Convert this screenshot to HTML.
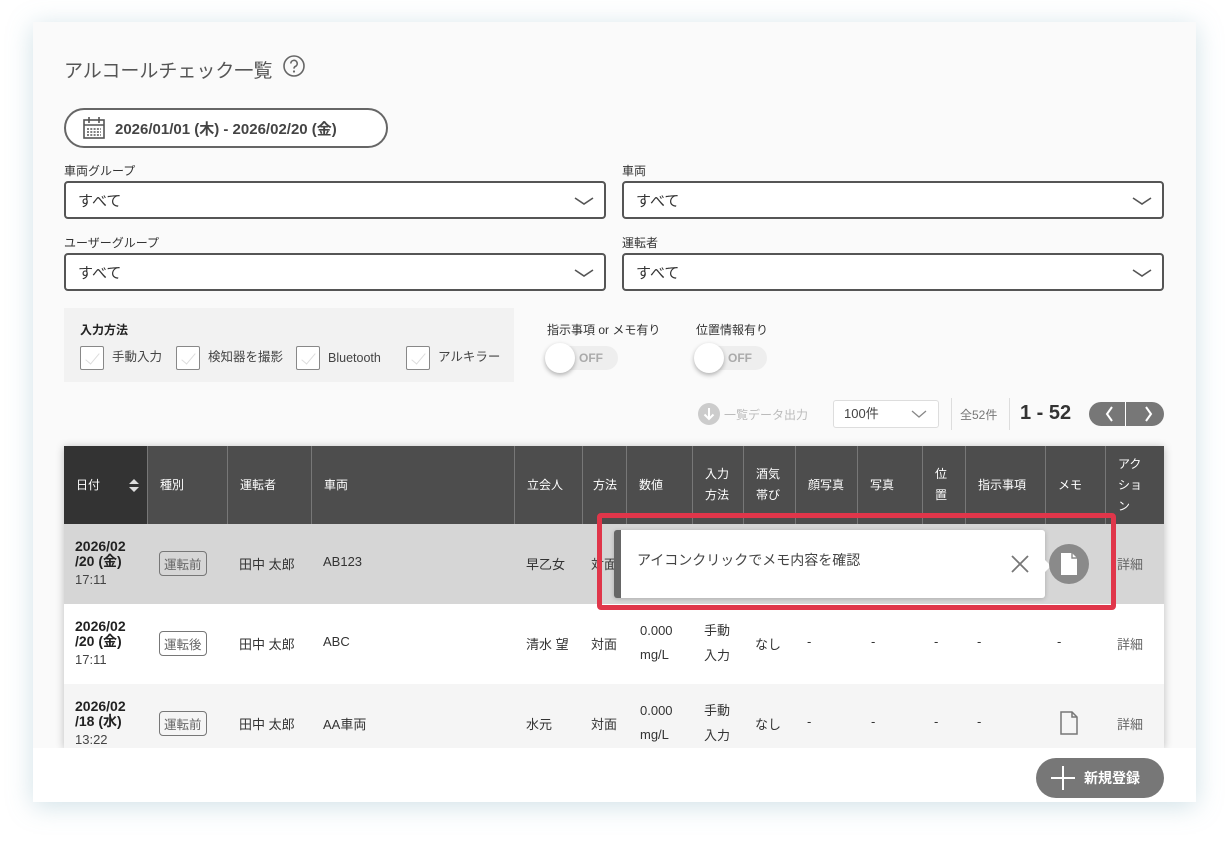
<!DOCTYPE html>
<html><head><meta charset="utf-8">
<style>
*{box-sizing:border-box;margin:0;padding:0}
body{width:1228px;height:844px;background:#fff;font-family:"Liberation Sans","Noto Sans CJK JP",sans-serif;color:#333;position:relative;overflow:hidden}
.a{position:absolute}
.card{left:33px;top:22px;width:1163px;height:780px;background:#fafafa;box-shadow:0 4px 24px rgba(120,170,185,.35)}
.lbl{font-size:12px;color:#333}
.sel{height:38px;border:2px solid #555;border-radius:4px;background:#fff;font-size:15px;padding:7px 12px;color:#333}
.sel svg{position:absolute;right:10px;top:13px}
.cb{width:24px;height:24px;border:1px solid #888;border-radius:2px;background:#fff}
.cb::after{content:"";position:absolute;left:8px;top:3px;width:6px;height:13px;border-right:1px solid #ddd;border-bottom:1px solid #ddd;transform:rotate(40deg)}
.cbl{font-size:12.5px;color:#444;line-height:24px;height:24px}
.tog{width:72px;height:24px;border-radius:12px;background:#eee}
.knob{width:30px;height:30px;border-radius:50%;background:#fff;box-shadow:0 2px 5px rgba(0,0,0,.3)}
.th{background:#4d4d4d;color:#fff;font-size:12px;border-right:1px solid #777;height:78px;top:446px;display:flex;align-items:center;padding-left:12px;line-height:21px}
.td{font-size:13px;color:#333}
.tag{border:1px solid #777;border-radius:4px;font-size:12.5px;color:#666;padding:2px 4px;background:transparent}
.dt{font-size:14px;font-weight:bold;line-height:15px;color:#222}
.tm{font-size:13px;color:#444}
</style></head><body>
<div class="a card"></div>
<div class="a" style="left:64px;top:56px;font-size:19px;color:#555">アルコールチェック一覧</div>
<svg class="a" style="left:283px;top:55px" width="22" height="22" viewBox="0 0 22 22"><circle cx="11" cy="11" r="10" fill="none" stroke="#666" stroke-width="1.6"/><path d="M7.8 8.5a3.2 3.2 0 1 1 4.6 2.9c-1 .5-1.4 1-1.4 2.2" fill="none" stroke="#666" stroke-width="1.6"/><circle cx="11" cy="16.5" r="1.1" fill="#666"/></svg>
<div class="a" style="left:64px;top:108px;width:324px;height:40px;border:2px solid #666;border-radius:20px;background:#fff"></div>
<svg class="a" style="left:82px;top:116px" width="24" height="24" viewBox="0 0 24 24"><rect x="2" y="4" width="20" height="18" fill="none" stroke="#555" stroke-width="1.6"/><path d="M7 1v6M17 1v6M2 9h20" stroke="#555" stroke-width="1.6"/><path d="M5 13h14M5 16h14M5 19h14" stroke="#555" stroke-width="1.5" stroke-dasharray="2 1.3"/></svg>
<div class="a" style="left:115px;top:118px;font-size:15px;font-weight:bold;color:#444">2026/01/01 (木) - 2026/02/20 (金)</div>

<div class="a lbl" style="left:64px;top:162px">車両グループ</div>
<div class="a lbl" style="left:622px;top:162px">車両</div>
<div class="a lbl" style="left:64px;top:234px">ユーザーグループ</div>
<div class="a lbl" style="left:622px;top:234px">運転者</div>
<div class="a sel" style="left:64px;top:181px;width:542px">すべて<svg width="20" height="10"><path d="M1 2l9 6 9-6" fill="none" stroke="#555" stroke-width="1.6"/></svg></div>
<div class="a sel" style="left:622px;top:181px;width:542px">すべて<svg width="20" height="10"><path d="M1 2l9 6 9-6" fill="none" stroke="#555" stroke-width="1.6"/></svg></div>
<div class="a sel" style="left:64px;top:253px;width:542px">すべて<svg width="20" height="10"><path d="M1 2l9 6 9-6" fill="none" stroke="#555" stroke-width="1.6"/></svg></div>
<div class="a sel" style="left:622px;top:253px;width:542px">すべて<svg width="20" height="10"><path d="M1 2l9 6 9-6" fill="none" stroke="#555" stroke-width="1.6"/></svg></div>

<div class="a" style="left:64px;top:308px;width:450px;height:74px;background:#f2f2f2"></div>
<div class="a" style="left:80px;top:321px;font-size:12px;font-weight:bold;color:#222">入力方法</div>
<div class="a cb" style="left:80px;top:346px"></div><div class="a cbl" style="left:112px;top:345px">手動入力</div>
<div class="a cb" style="left:176px;top:346px"></div><div class="a cbl" style="left:208px;top:345px">検知器を撮影</div>
<div class="a cb" style="left:296px;top:346px"></div><div class="a cbl" style="left:328px;top:346px">Bluetooth</div>
<div class="a cb" style="left:406px;top:346px"></div><div class="a cbl" style="left:438px;top:345px">アルキラー</div>

<div class="a lbl" style="left:547px;top:321px">指示事項 or メモ有り</div>
<div class="a tog" style="left:546px;top:346px"></div><div class="a knob" style="left:545px;top:343px"></div><div class="a" style="left:579px;top:351px;font-size:12px;color:#aaa;font-weight:bold">OFF</div>
<div class="a lbl" style="left:696px;top:321px">位置情報有り</div>
<div class="a tog" style="left:695px;top:346px"></div><div class="a knob" style="left:694px;top:343px"></div><div class="a" style="left:728px;top:351px;font-size:12px;color:#aaa;font-weight:bold">OFF</div>

<div class="a" style="left:698px;top:403px;width:22px;height:22px;border-radius:50%;background:#ccc"></div>
<svg class="a" style="left:698px;top:403px" width="22" height="22"><path d="M11 5v11M6.5 11.5l4.5 4.5 4.5-4.5" fill="none" stroke="#fff" stroke-width="2"/></svg>
<div class="a" style="left:724px;top:406px;font-size:12px;color:#bbb">一覧データ出力</div>
<div class="a" style="left:833px;top:400px;width:106px;height:28px;border:1.5px solid #ddd;border-radius:3px;background:#fff;font-size:13px;padding:5px 10px;color:#444;line-height:16px">100件</div>
<svg class="a" style="left:911px;top:410px" width="16" height="9"><path d="M1 1l7 6 7-6" fill="none" stroke="#888" stroke-width="1.3"/></svg>
<div class="a" style="left:951px;top:398px;width:1px;height:32px;background:#ddd"></div>
<div class="a" style="left:960px;top:406px;font-size:12px;color:#777">全52件</div>
<div class="a" style="left:1009px;top:398px;width:1px;height:32px;background:#ddd"></div>
<div class="a" style="left:1020px;top:402px;font-size:20px;font-weight:bold;color:#333">1 - 52</div>
<div class="a" style="left:1089px;top:402px;width:75px;height:24px;border-radius:12px;background:#777"></div>
<div class="a" style="left:1125px;top:402px;width:1px;height:24px;background:#fff"></div>
<svg class="a" style="left:1100px;top:405px" width="60" height="18"><path d="M12 2l-5 7 5 7M46 2l5 7-5 7" fill="none" stroke="#fff" stroke-width="2"/></svg>

<div class="a" style="left:64px;top:446px;width:1100px;height:302px;box-shadow:0 1px 8px rgba(0,0,0,.25)"></div>
<div class="a th" style="left:64px;width:84px;background:#333">日付</div>
<svg class="a" style="left:128px;top:478px" width="12" height="16"><path d="M1 6l5-5 5 5zM1 9l5 5 5-5z" fill="#ddd"/></svg>
<div class="a th" style="left:148px;width:80px">種別</div>
<div class="a th" style="left:228px;width:84px">運転者</div>
<div class="a th" style="left:312px;width:203px">車両</div>
<div class="a th" style="left:515px;width:68px">立会人</div>
<div class="a th" style="left:583px;width:44px;padding-left:10px">方法</div>
<div class="a th" style="left:627px;width:66px">数値</div>
<div class="a th" style="left:693px;width:51px">入力<br>方法</div>
<div class="a th" style="left:744px;width:52px">酒気<br>帯び</div>
<div class="a th" style="left:796px;width:62px">顔写真</div>
<div class="a th" style="left:858px;width:65px">写真</div>
<div class="a th" style="left:923px;width:43px">位<br>置</div>
<div class="a th" style="left:966px;width:80px">指示事項</div>
<div class="a th" style="left:1046px;width:60px">メモ</div>
<div class="a th" style="left:1106px;width:58px;border-right:none">アク<br>ショ<br>ン</div>

<div class="a" style="left:64px;top:524px;width:1100px;height:80px;background:#d6d6d6"></div>
<div class="a" style="left:64px;top:604px;width:1100px;height:80px;background:#fff"></div>
<div class="a" style="left:64px;top:684px;width:1100px;height:64px;background:#f5f5f5"></div>

<div class="a dt" style="left:75px;top:539px">2026/02<br>/20 (金)</div><div class="a tm" style="left:75px;top:572px">17:11</div>
<div class="a tag" style="left:159px;top:551px">運転前</div>
<div class="a td" style="left:239px;top:554px">田中 太郎</div>
<div class="a td" style="left:323px;top:554px">AB123</div>
<div class="a td" style="left:526px;top:554px">早乙女</div>
<div class="a td" style="left:591px;top:554px">対面</div>
<div class="a td" style="left:1117px;top:554px;color:#666">詳細</div>

<div class="a dt" style="left:75px;top:619px">2026/02<br>/20 (金)</div><div class="a tm" style="left:75px;top:652px">17:11</div>
<div class="a tag" style="left:159px;top:631px">運転後</div>
<div class="a td" style="left:239px;top:634px">田中 太郎</div>
<div class="a td" style="left:323px;top:634px">ABC</div>
<div class="a td" style="left:526px;top:634px">清水 望</div>
<div class="a td" style="left:591px;top:634px">対面</div>
<div class="a td" style="left:640px;top:619px;line-height:24px">0.000<br>mg/L</div>
<div class="a td" style="left:704px;top:618px;line-height:25px">手動<br>入力</div>
<div class="a td" style="left:755px;top:634px">なし</div>
<div class="a td" style="left:807px;top:634px">-</div><div class="a td" style="left:871px;top:634px">-</div><div class="a td" style="left:934px;top:634px">-</div><div class="a td" style="left:977px;top:634px">-</div><div class="a td" style="left:1057px;top:634px">-</div>
<div class="a td" style="left:1117px;top:634px;color:#666">詳細</div>

<div class="a dt" style="left:75px;top:699px">2026/02<br>/18 (水)</div><div class="a tm" style="left:75px;top:732px">13:22</div>
<div class="a tag" style="left:159px;top:711px">運転前</div>
<div class="a td" style="left:239px;top:714px">田中 太郎</div>
<div class="a td" style="left:323px;top:714px">AA車両</div>
<div class="a td" style="left:526px;top:714px">水元</div>
<div class="a td" style="left:591px;top:714px">対面</div>
<div class="a td" style="left:640px;top:699px;line-height:24px">0.000<br>mg/L</div>
<div class="a td" style="left:704px;top:698px;line-height:25px">手動<br>入力</div>
<div class="a td" style="left:755px;top:714px">なし</div>
<div class="a td" style="left:807px;top:714px">-</div><div class="a td" style="left:871px;top:714px">-</div><div class="a td" style="left:934px;top:714px">-</div><div class="a td" style="left:977px;top:714px">-</div>
<svg class="a" style="left:1059px;top:711px" width="20" height="24"><path d="M2 1h11l5 5v17H2z" fill="none" stroke="#777" stroke-width="1.5"/><path d="M13 1v5h5" fill="none" stroke="#777" stroke-width="1.5"/></svg>
<div class="a td" style="left:1117px;top:714px;color:#666">詳細</div>

<div class="a" style="left:33px;top:748px;width:1163px;height:54px;background:#fff"></div>
<div class="a" style="left:1036px;top:758px;width:128px;height:40px;border-radius:20px;background:#777"></div>
<svg class="a" style="left:1050px;top:765px" width="26" height="26"><path d="M13 1v24M1 13h24" stroke="#fff" stroke-width="2"/></svg>
<div class="a" style="left:1084px;top:768px;font-size:14px;font-weight:bold;color:#fff">新規登録</div>

<div class="a" style="left:597px;top:513px;width:519px;height:97px;border:5px solid #e0364a;border-radius:4px"></div>
<div class="a" style="left:614px;top:530px;width:431px;height:68px;background:#fff;border-radius:3px;box-shadow:0 1px 5px rgba(0,0,0,.2);border-left:7px solid #666"></div>
<div class="a" style="left:1043px;top:558px;width:0;height:0;border-top:8px solid transparent;border-bottom:8px solid transparent;border-left:8px solid #fff"></div>
<div class="a" style="left:637px;top:550px;font-size:14px;color:#444">アイコンクリックでメモ内容を確認</div>
<svg class="a" style="left:1010px;top:554px" width="20" height="20"><path d="M2 2l16 16M18 2L2 18" stroke="#777" stroke-width="1.8"/></svg>
<div class="a" style="left:1049px;top:544px;width:40px;height:40px;border-radius:50%;background:#8a8a8a"></div>
<svg class="a" style="left:1059px;top:552px" width="20" height="24"><path d="M2 1h11l5 5v17H2z" fill="#fff"/><path d="M13 1v5h5" fill="none" stroke="#8a8a8a" stroke-width="1.4"/></svg>
</body></html>
